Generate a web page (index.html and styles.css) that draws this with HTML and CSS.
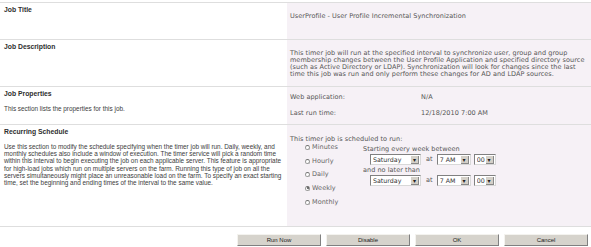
FILE: index.html
```html
<!DOCTYPE html>
<html lang="en">
<head>
    <meta charset="UTF-8">
    <title>Edit Timer Job</title>
    <link rel="stylesheet" href="styles.css">
</head>
<body>
    <div class="form">
        <div class="section sec-title">
            <div class="desc"><h3>Job Title</h3></div>
            <div class="controls">
                <div class="value">UserProfile - User Profile Incremental Synchronization</div>
            </div>
        </div>

        <div class="section sec-desc">
            <div class="desc"><h3>Job Description</h3></div>
            <div class="controls">
                <div class="value">This timer job will run at the specified interval to synchronize user, group and group membership changes between the User Profile Application and specified directory source (such as Active Directory or LDAP). Synchronization will look for changes since the last time this job was run and only perform these changes for AD and LDAP sources.</div>
            </div>
        </div>

        <div class="section sec-props">
            <div class="desc">
                <h3>Job Properties</h3>
                <p>This section lists the properties for this job.</p>
            </div>
            <div class="controls">
                <div class="props">
                    <span>Web application:</span><span>N/A</span>
                    <span>Last run time:</span><span>12/18/2010 7:00 AM</span>
                </div>
            </div>
        </div>

        <div class="section sec-schedule">
            <div class="desc">
                <h3>Recurring Schedule</h3>
                <p>Use this section to modify the schedule specifying when the timer job will run. Daily, weekly, and monthly schedules also include a window of execution. The timer service will pick a random time within this interval to begin executing the job on each applicable server. This feature is appropriate for high-load jobs which run on multiple servers on the farm. Running this type of job on all the servers simultaneously might place an unreasonable load on the farm. To specify an exact starting time, set the beginning and ending times of the interval to the same value.</p>
            </div>
            <div class="controls">
                <div class="schedule-intro">This timer job is scheduled to run:</div>
                <div class="schedule">
                    <div class="radios">
                        <label><input type="radio" name="freq"> Minutes</label>
                        <label><input type="radio" name="freq"> Hourly</label>
                        <label><input type="radio" name="freq"> Daily</label>
                        <label><input type="radio" name="freq" checked> Weekly</label>
                        <label><input type="radio" name="freq"> Monthly</label>
                    </div>
                    <div class="window">
                        <div class="caption">Starting every week between</div>
                        <div class="pick">
                            <span class="dd dd-day"><select><option>Saturday</option></select></span>
                            <span class="at">at</span>
                            <span class="dd dd-hour"><select><option>7 AM</option></select></span>
                            <span class="dd dd-min"><select><option>00</option></select></span>
                        </div>
                        <div class="caption">and no later than</div>
                        <div class="pick">
                            <span class="dd dd-day"><select><option>Saturday</option></select></span>
                            <span class="at">at</span>
                            <span class="dd dd-hour"><select><option>7 AM</option></select></span>
                            <span class="dd dd-min"><select><option>00</option></select></span>
                        </div>
                    </div>
                </div>
            </div>
        </div>

        <div class="buttons">
            <button type="button">Run Now</button>
            <button type="button">Disable</button>
            <button type="button">OK</button>
            <button type="button">Cancel</button>
        </div>
    </div>
</body>
</html>
```

FILE: styles.css
```css
body { margin: 0; background: #fff; font-family: "Liberation Sans", Arial, sans-serif; }
.form { padding-top: 2px; }
.section { display: grid; grid-template-columns: 287px 1fr; border-top: 1px solid #dedede; }
.sec-title { height: 36px; }
.sec-desc { height: 46px; }
.sec-props { height: 37px; }
.sec-schedule { height: 101px; border-bottom: 1px solid #dedede; }
.desc { padding: 3px 4px 0 4px; }
.desc h3 { margin: 0; font-size: 6.8px; line-height: 8px; color: #2e2e2e; }
.desc p { margin: 7px 0 0; font-size: 6.4px; line-height: 7.2px; color: #3c3c3c; }
.controls { background: #f6f1f6; padding: 0 1px 0 3px; font-family: "DejaVu Sans", Verdana, sans-serif; font-size: 6.5px; line-height: 6.9px; letter-spacing: 0.04px; color: #555; }
.sec-title .value { padding-top: 10px; }
.sec-desc .value { padding-top: 10px; }
.props { display: grid; grid-template-columns: 131px 1fr; row-gap: 9px; padding-top: 7px; }
.schedule-intro { padding-top: 11px; }
.schedule { display: flex; padding-left: 15px; }
.radios { display: flex; flex-direction: column; width: 58px; padding-top: 1px; }
.radios label { display: flex; align-items: flex-start; gap: 2px; height: 13.7px; color: #666; }
.radios input { appearance: none; margin: 1px 0 0; width: 5px; height: 5px; border: 1px solid #9a9a9a; border-top-color: #6f6f6f; border-radius: 50%; background: #fff; display: grid; place-items: center; }
.radios input:checked::after { content: ""; width: 2px; height: 2px; border-radius: 50%; background: #444; }
.window { padding-top: 3px; }
.caption { height: 7px; color: #555; }
.pick { display: flex; align-items: center; gap: 3px; height: 10px; margin: 2px 0 2px 7px; }
.at { margin: 0 1px 0 2px; }
.dd { position: relative; display: inline-block; height: 9px; border: 1px solid; border-color: #808080 #d8d8d8 #d8d8d8 #808080; background: #fff; }
.dd select { appearance: none; border: 0; margin: 0; padding: 0 0 0 2px; height: 9px; background: transparent; font-family: inherit; font-size: 6.3px; line-height: 9px; color: #333; width: 100%; }
.dd::after { content: "\25BE"; position: absolute; top: 1px; right: 1px; width: 7px; height: 7px; background: #d4d0c8; border: 0 solid #888; border-width: 0 1px 1px 0; font-size: 6px; line-height: 7px; text-align: center; color: #222; }
.dd-day { width: 49px; }
.dd-hour { width: 32px; }
.dd-min { width: 20px; }
.buttons { display: flex; justify-content: flex-end; gap: 5px; padding: 7px 3px 0 0; }
.buttons button { width: 84px; height: 12px; padding: 0; background: #d6d3cc; border: 1px solid; border-color: #f4f3ef #808080 #808080 #f4f3ef; font-family: "Liberation Sans", Tahoma, sans-serif; font-size: 6px; color: #222; }
```
